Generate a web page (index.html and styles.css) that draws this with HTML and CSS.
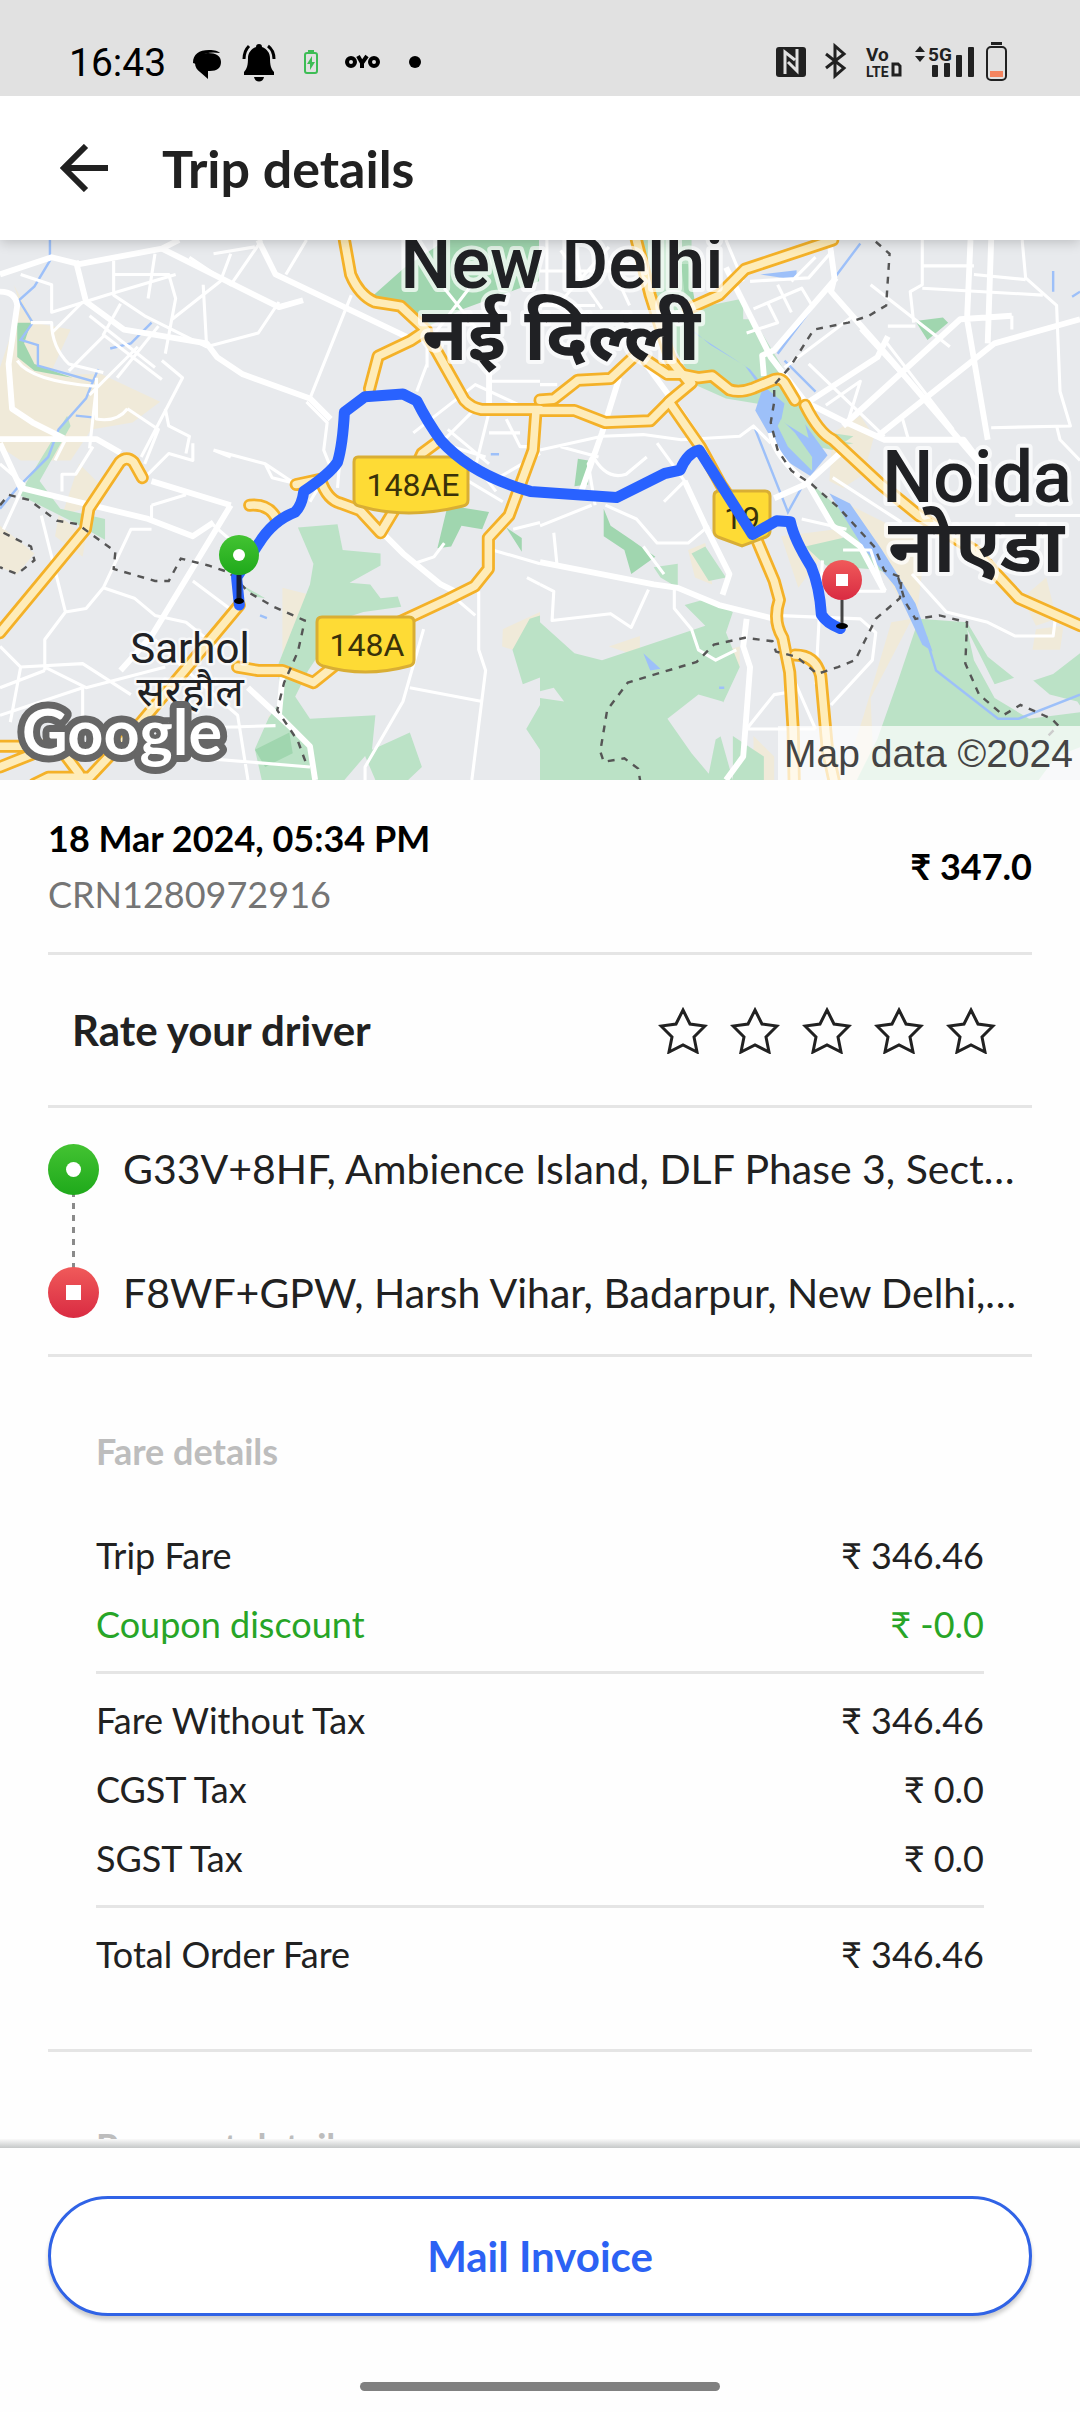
FILE: index.html
```
<!DOCTYPE html>
<html lang="en">
<head>
  <meta charset="UTF-8" />
  <meta name="viewport" content="width=device-width, initial-scale=1.0"/>
  <title>Trip details</title>
  <link rel="stylesheet" href="styles.css">
</head>
<body>

  <div class="status-bar">
    <div class="status-left">
      <span class="clock">16:43</span>
      <svg class="status-notes" viewBox="0 0 240 48">
        <!-- chat bubble -->
        <path d="M4 21c0-9 6-13 16-13 6 0 9 1 11 3-14-2-23 2-24 11z"/>
        <path d="M19 11c-8 0-13 4-13 10 0 4 2 7 5 9l8 7v-8h2c7 0 11-3 11-9s-5-9-13-9z"/>
        <!-- bell -->
        <path d="M70 2c2 0 3 1 3 3 5 2 8 6 8 11 0 7 1 11 4 14v3H55v-3c3-3 4-7 4-14 0-5 3-9 8-11 0-2 1-3 3-3z"/>
        <path d="M65 35h10c-1 6-9 6-10 0z"/>
        <path d="M60 4c-3 3-5 7-5 13M79 4c4 3 6 7 6 13" fill="none" stroke="#000" stroke-width="3"/>
        <!-- charging -->
        <rect x="116" y="11" width="12" height="20" rx="2" fill="none" stroke="#3dbd55" stroke-width="2"/>
        <path d="M119 8h6v3h-6zM123 14l-5 8h3v6l5-8h-3z" fill="#3dbd55"/>
        <!-- oyo -->
        <g fill="none" stroke="#000" stroke-width="4">
          <circle cx="162" cy="20" r="4"/>
          <circle cx="185" cy="20" r="4"/>
          <path d="M169 14l4 7 5-7M173 20v6"/>
        </g>
        <circle cx="226" cy="20" r="6"/>
      </svg>
    </div>
    <svg class="status-icons" viewBox="0 0 236 48">
      <g fill="#212121">
        <rect x="0" y="9" width="30" height="30" rx="3"/>
        <path d="M9 36V14l10 8M21 11v22l-9-9" fill="none" stroke="#e1e1e1" stroke-width="3"/>
        <path d="M50 16l18 14-9 8V8l9 8-18 14" fill="none" stroke="#212121" stroke-width="3"/>
        <text x="90" y="23" class="net-text">Vo</text>
        <text x="90" y="39" class="net-text small">LTE</text>
        <path d="M117 26h5l2 2v9h-7z" fill="none" stroke="#212121" stroke-width="3"/>
        <path d="M139 14l5-6 5 6zM139 18l5 6 5-6z"/>
        <text x="152" y="23" class="net-text">5G</text>
        <rect x="156" y="27" width="6" height="12" rx="1"/>
        <rect x="168" y="25" width="6" height="14" rx="1"/>
        <rect x="180" y="17" width="6" height="22" rx="1"/>
        <rect x="192" y="9" width="6" height="30" rx="1"/>
        <rect x="215" y="4" width="11" height="3"/>
        <rect x="211" y="9" width="19" height="33" rx="4" fill="none" stroke="#212121" stroke-width="2"/>
        <rect x="214" y="33" width="13" height="6" fill="#f4845f"/>
      </g>
    </svg>
  </div>

  <header class="app-bar">
    <button class="back" aria-label="Back">
      <svg viewBox="0 0 48 48"><path d="M48 24H5M26 2L4 24l22 22" fill="none" stroke="#212121" stroke-width="6"/></svg>
    </button>
    <h1>Trip details</h1>
  </header>

  <main>
    <div class="map">
      <svg viewBox="0 0 1080 540">
        <defs>
          <linearGradient id="green" x1="0" y1="0" x2="0" y2="1">
            <stop offset="0" stop-color="#43c332"/><stop offset="1" stop-color="#1fa91b"/>
          </linearGradient>
          <linearGradient id="red" x1="0" y1="0" x2="0" y2="1">
            <stop offset="0" stop-color="#f05a5a"/><stop offset="1" stop-color="#d92b42"/>
          </linearGradient>
          <g id="hwWest">
            <path d="M0 1140L248 840l10-60 90-135q20-20 40 0l25 45"/>
            <path d="M1000 0l18 100q25 60 70 80l75 12 75 70-45 30-95 45-25 95"/>
            <path d="M1238 270l110 195q20 22 50 27h170"/>
            <path d="M1556 500l-8 110-70 190-60 65v90l-40 50-80 40-150 70"/>
            <path d="M725 770q60-5 80 45"/>
            <path d="M860 710l70-15q20 60 60 70l55 20 60 65 60-100 60-130 40-30"/>
            <path d="M695 1060l-75 90-210 250-150 160h-120l-40 20"/>
            <path d="M690 1240l60 10h70l90 35 100-80"/>
            <path d="M0 1470h170l60 80M0 1530l100-40 100-10"/>
          </g>
          <g id="hwEast">
            <path d="M0 465l40-3 70-55 95-5 70-65"/>
            <path d="M280 0l40 160 60 190 50 60"/>
            <path d="M430 200l90-40 75-75L850 0"/>
            <path d="M310 350l60 40h40l50 10 40-5 50 40q30 10 70-5l60-25q20-5 30 10l30 50"/>
            <path d="M0 495h100l90 35 130-5 60-60 60-50"/>
            <path d="M375 470l90 130 60 110 100 150 55 130 15 55q-20 60 10 110l20 100 10 165 5 250"/>
            <path d="M770 480q40 80 80 100l140 130 110 90 160 100 130 140 180 80"/>
            <path d="M740 1205q60 0 75 60l20 220 20 90"/>
          </g>
        </defs>

        <rect width="1080" height="540" fill="#e8eaed"/>

        <!-- western half -->
        <g transform="scale(.3444)">
          <g fill="#f0ead9">
            <path d="M40 130l60 110 105 20-60 130h150l170 80-80 60-120 20-60 90H60l-60-40V370l60-180z"/>
            <path d="M230 650l60 60-50 70-60 20zM170 800l80 60-10 60-80-60zM0 830l100 80-50 60-50-20z"/>
            <path d="M820 1010l80 20-10 120-70 60zM1460 1130l108-50v50l-80 60-30-10zM780 1380l60 30v158h-60z"/>
          </g>
          <g fill="#bbe2c6">
            <path d="M195 510l10 30-90 160 60 80 130 30v60l-90-50-160-80z"/>
            <path d="M980 825l15 75 110 10v35l-90 50 60 5 30 40 50-5 10 30-110 15-60 20-100 150-70 140-20-150 95-240 10-60-45-105z"/>
            <path d="M840 1300l60 90 190-10-10 100 110-50 35 100-40 38h-95l-30-70-60 70h-240l-20-90 40-90z"/>
            <path d="M1568 1090l-30 10-50 90 30 100 50-20zM1568 1350l-40 70 40 60zM700 1000l70 40-30-5z"/>
          </g>
          <g fill="#a0d6af">
            <path d="M1175 80l-90 80 80 40 60 60 120-60 220-80V0h-270z"/>
            <path d="M1300 770l120 20-20 50-60-10-30 60-40 5zM1470 835l45 30v40zM50 240h40l-20 60 30 60 110 40-110-20-50-40z"/>
            <path d="M740 1480l100-50 10 60-80 40z"/>
          </g>
          <g class="water">
            <path d="M145 0v60l-45 75-45 40 40 65-35 50 50 15v60l160 45 15-35M320 315l60-15 60-60M270 410l-20 50-80 90-30 80-90 90-50 60"/>
            <path d="M220 510l50 5M755 1090l20 8M1425 622h24" />
          </g>
          <g class="roads wide">
            <path d="M0 100L150 50l80 20L470 25l50-25M220 60l30 120 110 80L600 300l30 40 75 50 195 70 60 60"/>
            <path d="M470 25l340 170 70-20M750 0l50 100 410 195M0 150q45 0 50 40l-25 170 10 130 60 40 90 45M0 578h280l70 40M440 700l230 70"/>
            <path d="M0 590l60 130 370 90 130 50 60-40M1120 860l50 50 110 90 60 30M820 1270l-10 110 90 90 15 98M1420 370v130M720 1300l130 120M350 1250l90-100 230-380"/>
          </g>
          <g class="roads">
            <path d="M60 100l90 30v80l160-50 200-60M330 60v100l90 60 180 90M330 100h160l20 70-30 160M430 170l20-130M550 50l120 80 90-130M500 230l140-110 30-80M590 130l10 180 150-40 60-90M830 100l60-100M620 40l120-20"/>
            <path d="M90 240h60q0 70 50 120l100 25M240 180l-90 90M350 185l-50 90 170 130M300 280L200 380M400 310l-140 140M470 350l60 50-120 230M460 250L340 400M260 220L450 370M50 350q40 60 230 75l-20 180M280 400v120q60 10 90-30M370 490l90 60-40 100"/>
            <path d="M480 490l10 50 60 30-10 50M410 700l80-80 70 20v-50M190 580l-30 60M270 600l-50 80h-40v50M620 610l150 40 90 60M620 610l50 20M770 650l20 40 80 20M900 460l120-300M890 470l60 60-10 80 20 50-60 100M990 600l-10 120"/>
            <path d="M0 650l70 60-60 130M120 800l70 280-60 80v90M190 1080l60-10 50-60 90 30 60 50 90 20 100 80M300 1010l80-170h60M440 770l100-30M440 770v40M610 820l70 60M560 990l120 90"/>
            <path d="M0 1180l60 60 180-10 140 90M130 1240l120 60 230-60M0 1300l130-50M0 1380l240-80v90M60 1240l-30 160M450 1160l80 80 160 140 30 188M480 1420l320-10M530 1500l370 30"/>
            <path d="M1290 880l-30 40-60 20M1390 1020v170l20 60-40 318M1310 1030l70 60M1230 1130l-60 210-110 190v38M1190 1300l210 40M1360 700l100 60M1430 900l138 40M1200 560l180-140 130 60M1370 500l-90 90 130 40M1420 500l-40 160M1240 370v-70l130-170M1210 440l30-80M1290 140l120 150M1420 410h148M1470 520l40 80h58M1420 560h90M1300 550l120 100M1430 700l138-80M1370 640l70 90M1490 840l78-20M1530 980l38 20"/>
          </g>
        </g>

        <!-- eastern half -->
        <g transform="translate(540) scale(.3444)">
          <g fill="#f0ead9">
            <path d="M850 560l80-50 40 60-30 110-60 40-40-20zM700 860l50 150 60-80 120 10-70-100zM900 770l220 110-30 240-110-190-120-150z"/>
            <path d="M960 1330l120-230-60 10-80 270-60 188h90zM1400 1040l70-60 30 120-60 20zM430 900l50-20 20 120-50-20zM200 1180l90-30v60zM500 1200l80 40v-60M620 1440l60 60v68h-60zM1440 1130l80-10-10 70h-80zM1500 1350l68-20v100h-68z"/>
          </g>
          <g fill="#bbe2c6">
            <path d="M280 0h160v200l150-30v60l30 0 120 200 100 130 70 10-60 40-100-20-90-110-120-20-90-40-90-160z"/>
            <path d="M0 1110l100 90 80 20 120-40 180-60-60-60 70-20 70 40-20 60 40 100-70 150 50 178H0z"/>
            <path d="M780 700l90 80 120 130 20 60-90-40-80-130zM770 890l130-30 70 70 40 30-120-10-60-5zM330 950l70-10v70l-50-30zM440 910l40-20 60 90-50 10zM560 1440l90 60v68h-90z"/>
            <path d="M1100 1100l140 10 60 100 100 80 90-30 78-60v-30l60 0v280l-130 50-50 68H920l60-120 60-170z"/>
            <path d="M850 580l60 10-50 10z"/>
          </g>
          <g fill="#e8eaed">
            <path d="M370 1390l90-70 70 20 60 60-80 50-20 100-50-60zM0 1310l40-10 30 40-70-10zM1240 1130l80 160 90-30 70 60 80 20 20 30-160 20-100-60-60-110z"/>
          </g>
          <g fill="#a0d6af">
            <path d="M1090 235l80-10 15 15-60 50zM110 635l30 5v70l-40 5zM185 780l20 50 60 40 70 50-70 50-20-70-60-40zM410 70h20l20 110-30-20z"/>
          </g>
          <g fill="#9dc0f9">
            <path d="M440 265l170 110 40 50 60 50-10 50 80 50-10-40 65 90-50 60-80-50-80-140 20-60-50-70-100-60-60-50z"/>
            <path d="M640 100l105-12v28zM300 1200l50 45-30 5zM840 735l60 30 90 130 100 160 50 140-30-20-80-170-90-110z"/>
          </g>
          <path d="M700 520l40 40 50 70v40l-70-70-30-60z" fill="#bbe2c6"/>
          <g class="water">
            <path d="M930 10L690 330M710 350l90 90M625 550l95 240 50-90M1120 1150l30 100 180 140h60l178-70M1490 90v60M1545 165l23-15M520 1300h15"/>
          </g>
          <g class="roads wide">
            <path d="M540 80l130 260 100 130 120 60 110 50h230l60 80M860 110L680 320l-35 15 5 60M840 0l15 110-10 40 150 170 300 350M780 470l200-130 30-60M880 540L1220 230l150-10M980 570l340-270 248-70M1250 0l-10 230 60 350M1310 0l-10 300M870 620L770 710l-90 40M480 830l70 140-20 60M0 935l330 65 70 10 120 50 160 40M600 1100l-10 80 20 60-20 260-50 68"/>
            <path d="M300 350l110 150 60 90M230 400l-50 160-60 170M420 700l70 150M670 560q10 70 110 150l70 120 80 60 70 130"/>
          </g>
          <g class="roads">
            <path d="M1110 0v130l-35 20 10 90M1110 75h150M1110 140l350 20M1400 0l10 110 90 80 10 250 30 100-230 5M1260 100l150 15M1370 220v40M930 260l250 270M1000 290l200 260M780 360l220 210M890 540l40-130-100 70M850 30l-70 80-170 10M620 200l140-60 30 50M600 270l90-30-30-60M800 50L730 120M690 130l40 80M710 370l200-150M1010 250h80M1190 310L960 130M540 0l50 120"/>
            <path d="M0 610l180-40 120-5 110 15 170-10 40-30 50 50M180 570l-40 80 20 120M150 620q40 80 100 60l60-50M0 830l150-60M60 600l110 30M190 770l90 40 60 70 90 0 60-50M300 890l60 80M340 590l80 110-60 60M450 600l60 60M40 850l10 100M0 1000l40 20-5 85 170-20 60 40 50-110M390 1010v60l50 60 20 60 50 30 60-30M680 1090l250 10 45 40-10 80-120 130M820 930l-20 360M600 1420h200M600 1420l80-100 60-10M730 1260l70 160M850 690l200 130M880 900h80l40 120h-80M760 810l130 30M1080 970l100 110 120 30 80 40h110l10-80M1380 800h188M1500 540l10 40 58 60M1050 510l20 70M1160 700l30-60 150 100"/>
            <path d="M20 0v180M0 90h240M60 30l120 170M200 20L50 190M0 190h160M100 0l20 120M200 60l60 130M0 420h50"/>
          </g>
        </g>

        <!-- highways -->
        <g class="hw-case">
          <use href="#hwWest" transform="scale(.3444)"/>
          <use href="#hwEast" transform="translate(540) scale(.3444)"/>
        </g>
        <g class="hw-core">
          <use href="#hwWest" transform="scale(.3444)"/>
          <use href="#hwEast" transform="translate(540) scale(.3444)"/>
        </g>

        <g class="border">
          <path transform="scale(.3444)" d="M0 770l25-30 60 15 80 60 60 10 110 80-5 50 120 35h40l35-65 80 20 60 20 60 60 70 40 90 40-20 90-40 90-20 80 60 90 25 68M10 850l80 40 10 40-50 40-50-20"/>
          <path transform="translate(540) scale(.3444)" d="M975 5l40 35-10 150-50 30-60 20-100 20-70 110-45 50v50l-10 60 20 80 40 60 60 40 80 70 100 110 30 70 50 20-5 60-70 60-60 120-50 20-60 20-60-50-60-15-10-30-80-10-90 20-50 50-200 60-60 80-20 120 10 30 60-10 40 30 10 60M1040 980l20 70 30 50 70-10 80 20-5 120 40 90 70 60 50-30 90 40 20 20-40 40"/>
        </g>

        <!-- road shields -->
        <g class="shield">
          <path d="M358 217h105q5 0 5 5v38q0 5-5 6-56 14-104 0-5-1-5-6v-38q0-5 4-5z"/>
          <path d="M322 377h87q5 0 5 5v38q0 5-5 6-44 12-86 0-6-2-6-6v-38q0-5 5-5z"/>
          <path d="M719 251h46q5 0 5 5v35q0 4-4 6l-24 9-24-9q-4-2-4-6v-35q0-5 5-5z"/>
          <text x="413" y="256">148AE</text>
          <text x="367" y="416">148A</text>
          <text x="742" y="289">19</text>
        </g>

        <g class="city">
          <text x="562" y="48">New Delhi</text>
          <text x="561" y="120" class="hindi">नई दिल्ली</text>
          <text x="977" y="262">Noida</text>
          <text x="976" y="332" class="hindi">नोएडा</text>
        </g>
        <g class="town">
          <text x="190" y="423">Sarhol</text>
          <text x="190" y="466">सरहौल</text>
        </g>

        <!-- route -->
        <path class="route" transform="scale(.3444)" d="M695 1060l-8-80 65-100q40-65 105-90 20-20 25-60 75-50 98-85 15-50 20-145l60-45 110-8 40 20q30 60 70 115 90 100 260 148l250 18 140-70 45-10q20-50 55-58l155 245 70-40 40 3q10 50 60 130 25 60 30 140 15 25 55 40"/>

        <!-- pickup and drop pins -->
        <path d="M239 335v26" stroke="#161f3a" stroke-width="5"/>
        <ellipse cx="239" cy="361" rx="5" ry="3"/>
        <circle cx="239" cy="315" r="20" fill="url(#green)"/>
        <circle cx="239" cy="315" r="6" fill="#fff"/>
        <path d="M842 360v26" stroke="#444" stroke-width="3"/>
        <ellipse cx="842" cy="386" rx="6" ry="3"/>
        <circle cx="842" cy="340" r="20" fill="url(#red)"/>
        <rect x="836" y="334" width="12" height="12" fill="#fff"/>

        <text class="google" x="22" y="515">Google</text>
        <rect x="778" y="486" width="302" height="54" fill="#fff" opacity=".7"/>
        <text class="credit" x="784" y="527">Map data ©2024</text>
      </svg>
    </div>

    <section class="summary">
      <div>
        <p class="date">18 Mar 2024, 05:34 PM</p>
        <p class="crn">CRN1280972916</p>
      </div>
      <p class="amount">₹ 347.0</p>
    </section>

    <section class="rating">
      <h2>Rate your driver</h2>
      <div class="stars">
        <button aria-label="1 star"><svg viewBox="0 0 50 48"><path d="M25 4l7 14 15 2-11 11 3 15-14-7-14 7 3-15L3 20l15-2z"/></svg></button>
        <button aria-label="2 stars"><svg viewBox="0 0 50 48"><path d="M25 4l7 14 15 2-11 11 3 15-14-7-14 7 3-15L3 20l15-2z"/></svg></button>
        <button aria-label="3 stars"><svg viewBox="0 0 50 48"><path d="M25 4l7 14 15 2-11 11 3 15-14-7-14 7 3-15L3 20l15-2z"/></svg></button>
        <button aria-label="4 stars"><svg viewBox="0 0 50 48"><path d="M25 4l7 14 15 2-11 11 3 15-14-7-14 7 3-15L3 20l15-2z"/></svg></button>
        <button aria-label="5 stars"><svg viewBox="0 0 50 48"><path d="M25 4l7 14 15 2-11 11 3 15-14-7-14 7 3-15L3 20l15-2z"/></svg></button>
      </div>
    </section>

    <section class="stops">
      <svg class="stops-line" viewBox="0 0 51 174">
        <path d="M25.500 48v78" stroke="#8a8a8a" stroke-width="3" stroke-dasharray="6 6" stroke-dashoffset="1"/>
        <circle cx="25.500" cy="25.500" r="25.500" fill="url(#green)"/>
        <circle cx="25.500" cy="25.500" r="7.500" fill="#fff"/>
        <circle cx="25.500" cy="148.500" r="25.500" fill="url(#red)"/>
        <rect x="18" y="141" width="15" height="15" fill="#fff"/>
      </svg>
      <div class="stops-text">
        <p>G33V+8HF, Ambience Island, DLF Phase 3, Sect…</p>
        <p>F8WF+GPW, Harsh Vihar, Badarpur, New Delhi,…</p>
      </div>
    </section>

    <section class="fare">
      <h3>Fare details</h3>
      <dl>
        <div class="row"><dt>Trip Fare</dt><dd>₹ 346.46</dd></div>
        <div class="row discount"><dt>Coupon discount</dt><dd>₹ -0.0</dd></div>
      </dl>
      <dl>
        <div class="row"><dt>Fare Without Tax</dt><dd>₹ 346.46</dd></div>
        <div class="row"><dt>CGST Tax</dt><dd>₹ 0.0</dd></div>
        <div class="row"><dt>SGST Tax</dt><dd>₹ 0.0</dd></div>
      </dl>
      <dl>
        <div class="row"><dt>Total Order Fare</dt><dd>₹ 346.46</dd></div>
      </dl>
    </section>

    <section class="fare">
      <h3>Payment details</h3>
    </section>
  </main>

  <footer>
    <button class="mail-btn">Mail Invoice</button>
    <div class="home-bar"></div>
  </footer>

</body>
</html>
```
FILE: styles.css
```
* {
  box-sizing: border-box;
}

body {
  margin: 0;
  height: 100vh;
  display: flex;
  flex-direction: column;
  font-family: Lato, sans-serif;
  font-size: 36px;
  line-height: 45px;
  color: #212121;
  background-color: #fefefe;
}

h1, h2, h3, p, dl, dd {
  margin: 0;
}

button {
  font-family: inherit;
  border: none;
  background: none;
  padding: 0;
  cursor: pointer;
}

svg {
  display: block;
}

/* status bar */
.status-bar {
  flex: none;
  display: flex;
  justify-content: space-between;
  height: 96px;
  padding: 38px 68px 0 69px;
  background-color: #e1e1e1;
}

.status-left {
  display: flex;
  gap: 23px;
}

.clock {
  font-family: Roboto, sans-serif;
  font-size: 39px;
  line-height: 50px;
  color: #000;
}

.status-notes {
  width: 240px;
  height: 48px;
  margin-top: 4px;
}

.status-icons {
  width: 236px;
  height: 48px;
}

.net-text {
  font-family: Roboto, sans-serif;
  font-size: 19px;
  font-weight: 700;
}

.small {
  font-size: 14px;
}

/* header */
.app-bar {
  flex: none;
  display: flex;
  align-items: center;
  gap: 54px;
  height: 144px;
  padding: 0 60px;
  background-color: #fff;
  box-shadow: 0 2px 12px rgba(0, 0, 0, 0.2);
  clip-path: inset(0 0 -20px 0);
  z-index: 1;
}

.back svg {
  width: 48px;
  height: 48px;
}

h1 {
  font-size: 52px;
  line-height: 62px;
  font-weight: 700;
}

main {
  flex: 1;
  min-height: 0;
  overflow-y: auto;
  scrollbar-width: none;
}

/* map */
.map svg {
  width: 100%;
}

.roads {
  fill: none;
  stroke: #fff;
  stroke-width: 9;
  stroke-linejoin: round;
}

.wide {
  stroke-width: 17;
}

.water {
  fill: none;
  stroke: #9dc0f9;
  stroke-width: 7;
}

.hw-case, .hw-core {
  fill: none;
  stroke: #f4b128;
  stroke-width: 38;
  stroke-linejoin: round;
  stroke-linecap: round;
}

.hw-core {
  stroke: #feecb9;
  stroke-width: 22;
}

.border {
  fill: none;
  stroke: #555;
  stroke-width: 7;
  stroke-dasharray: 20 20;
}

.route {
  fill: none;
  stroke: #2962ff;
  stroke-width: 32;
  stroke-linejoin: round;
  stroke-linecap: round;
}

.shield path {
  fill: #fedb35;
  stroke: #d9ae34;
  stroke-width: 3;
}

.shield text {
  font-family: Roboto, sans-serif;
  font-size: 32px;
  text-anchor: middle;
  fill: #3a3209;
}

.city text, .town text {
  font-family: Roboto, "Noto Sans Devanagari", "Noto Sans", sans-serif;
  font-size: 72px;
  font-weight: 500;
  text-anchor: middle;
  fill: #202124;
  stroke: rgba(255, 255, 255, 0.7);
  stroke-width: 8px;
  stroke-linejoin: round;
  paint-order: stroke;
}

.city .hindi {
  font-size: 74px;
  font-weight: 700;
}

.town text {
  font-size: 42px;
  font-weight: 400;
  stroke-width: 5px;
}

.google {
  font-family: Lato, sans-serif;
  font-size: 63px;
  font-weight: 700;
  fill: #fff;
  stroke: #666;
  stroke-width: 14px;
  stroke-linejoin: round;
  paint-order: stroke;
}

.credit {
  font-family: "Liberation Sans", Arial, sans-serif;
  font-size: 39px;
  fill: #444;
}

/* trip sections */
section {
  margin: 0 48px;
  border-bottom: 3px solid #e5e5e5;
}

.summary {
  display: flex;
  justify-content: space-between;
  align-items: center;
  padding: 36px 0 35px;
  color: #000;
}

.date, .amount {
  font-weight: 700;
}

.crn {
  margin-top: 11px;
  color: #757575;
}

.rating {
  display: flex;
  justify-content: space-between;
  align-items: center;
  padding: 50px 25px 50px 24px;
}

h2 {
  font-size: 42px;
  line-height: 50px;
  font-weight: 700;
}

.stars {
  display: flex;
}

.stars button {
  width: 72px;
  display: flex;
  justify-content: center;
}

.stars svg {
  width: 50px;
  height: 48px;
  fill: none;
  stroke: #212121;
  stroke-width: 3;
}

.stops {
  display: flex;
  gap: 24px;
  padding: 36px 0;
}

.stops-line {
  flex: none;
  width: 51px;
  height: 174px;
}

.stops-text {
  flex: 1;
  min-width: 0;
  display: flex;
  flex-direction: column;
  justify-content: space-between;
}

.stops-text p {
  font-size: 41px;
  line-height: 50px;
  white-space: nowrap;
}

/* fare breakdown */
.fare {
  padding: 72px 48px;
}

h3 {
  font-size: 36px;
  line-height: 45px;
  font-weight: 700;
  color: #bdbdbd;
  margin-bottom: 35px;
}

dl {
  display: flex;
  flex-direction: column;
  gap: 24px;
  padding: 24px 0;
  border-bottom: 3px solid #e5e5e5;
}

dl:last-child {
  padding-bottom: 0;
  border-bottom: none;
}

.row {
  display: flex;
  justify-content: space-between;
}

.discount {
  color: #27a527;
}

/* bottom bar */
footer {
  flex: none;
  padding: 57px 48px 21px;
  background: linear-gradient(#fafafa, #c6c8c8 9px, #fefefe 9px);
}

.mail-btn {
  display: block;
  width: 100%;
  height: 120px;
  font-size: 42px;
  font-weight: 700;
  color: #2c62f4;
  background-color: #fff;
  border: 3px solid #3063e6;
  border-radius: 60px;
  box-shadow: 0 4px 4px rgba(0, 0, 0, 0.2);
}

.home-bar {
  width: 360px;
  height: 9px;
  margin: 66px auto 0;
  border-radius: 5px;
  background-color: #808080;
}
```
